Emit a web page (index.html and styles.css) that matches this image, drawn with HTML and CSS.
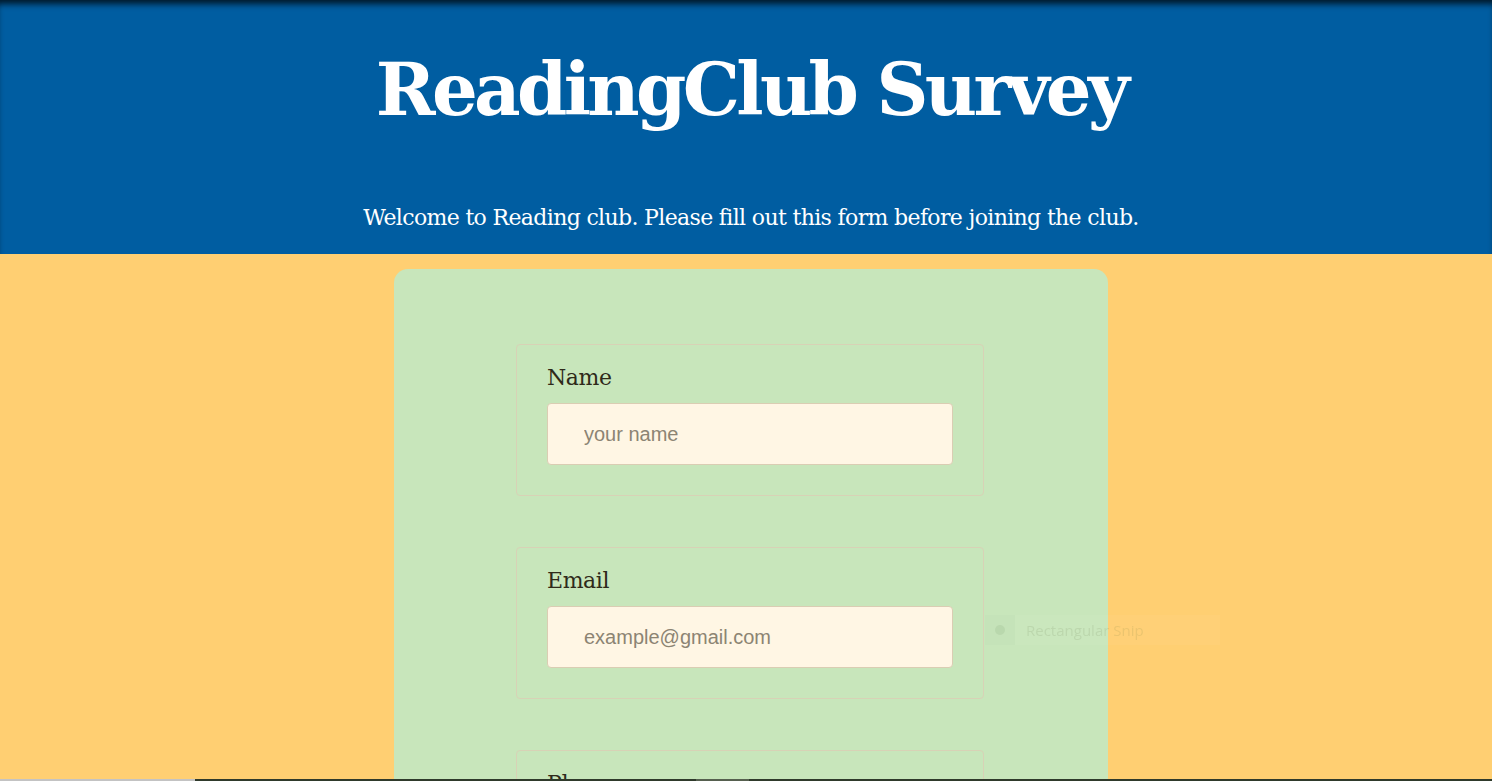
FILE: index.html
```html
<!DOCTYPE html>
<html lang="en">
<head>
<meta charset="utf-8">
<title>ReadingClub Survey</title>
<link rel="stylesheet" href="styles.css">
</head>
<body>
<header class="site-header">
  <h1 class="title">ReadingClub Survey</h1>
  <p class="intro">Welcome to Reading club. Please fill out this form before joining the club.</p>
</header>
<main class="page">
  <form class="card">
    <fieldset class="field">
      <label class="field-label" for="name">Name</label>
      <input class="field-input" id="name" type="text" placeholder="your name">
    </fieldset>
    <fieldset class="field">
      <label class="field-label" for="email">Email</label>
      <input class="field-input" id="email" type="email" placeholder="example@gmail.com">
    </fieldset>
    <fieldset class="field">
      <label class="field-label" for="phone">Phone</label>
      <input class="field-input" id="phone" type="tel" placeholder="your phone number">
    </fieldset>
  </form>
</main>
<div class="snip-tip"><span class="snip-icon"></span><span class="snip-text">Rectangular Snip</span></div>
<div class="taskbar-edge"><span class="seg seg-light"></span><span class="seg seg-dark1"></span><span class="seg seg-mid"></span><span class="seg seg-dark2"></span></div>
</body>
</html>
```
FILE: styles.css
```css
* { box-sizing: border-box; }
html, body { margin: 0; padding: 0; }
body {
  background: #ffcf72;
  font-family: "DejaVu Serif", Georgia, serif;
}
.site-header {
  background: #005da1;
  color: #fff;
  text-align: center;
  height: 254px;
  padding-top: 44px;
  padding-left: 10px;
  box-shadow: inset 0 7px 6px -3px rgba(0, 0, 0, 0.75);
}
.title {
  margin: 0;
  font-size: 72px;
  line-height: 92px;
  font-weight: bold;
  letter-spacing: -3.7px;
}
.intro {
  margin: 67px 0 0;
  font-size: 22px;
  line-height: 30px;
  letter-spacing: -0.65px;
}
.page {
  padding-top: 15px;
  padding-left: 10px;
  display: flex;
  justify-content: center;
}
.card {
  width: 714px;
  background: #c8e6bb;
  border-radius: 14px;
  padding: 75px 124px 40px 122px;
  display: flex;
  flex-direction: column;
  gap: 51px;
}
.field {
  margin: 0;
  border: 1px solid #d8d2b6;
  border-radius: 4px;
  padding: 17px 30px 30px;
  display: flex;
  flex-direction: column;
  min-width: 0;
}
.field-label {
  font-size: 22px;
  line-height: 32px;
  color: #2f2a1a;
  margin-bottom: 9px;
  letter-spacing: -0.4px;
}
.field-input {
  height: 62px;
  border: 1px solid #dacdb3;
  border-radius: 4px;
  background: #fff6e4;
  padding: 0 36px;
  font-family: "Liberation Sans", Arial, sans-serif;
  font-size: 20px;
  color: #333;
}
.field-input::placeholder { color: #8c8473; }
.snip-tip {
  position: fixed;
  left: 985px;
  top: 615px;
  width: 235px;
  height: 30px;
  display: flex;
  align-items: center;
  background: rgba(255, 255, 255, 0.04);
  font-family: "Open Sans", sans-serif;
  font-size: 15px;
  color: rgba(90, 110, 60, 0.12);
}
.snip-icon {
  width: 30px;
  height: 30px;
  display: flex;
  align-items: center;
  justify-content: center;
  background: rgba(120, 160, 120, 0.05);
  margin-right: 11px;
}
.snip-icon::before {
  content: "";
  width: 10px;
  height: 10px;
  border-radius: 50%;
  background: rgba(100, 140, 80, 0.12);
}
.taskbar-edge {
  position: fixed;
  left: 0;
  right: 0;
  bottom: 0;
  height: 2px;
  display: flex;
}
.seg { display: block; height: 100%; }
.seg-light { width: 195px; background: #c3c3c3; }
.seg-dark1 { width: 501px; background: #2f3a2b; }
.seg-mid { width: 53px; background: #56604f; }
.seg-dark2 { flex: 1; background: #2f3a2b; }
```
